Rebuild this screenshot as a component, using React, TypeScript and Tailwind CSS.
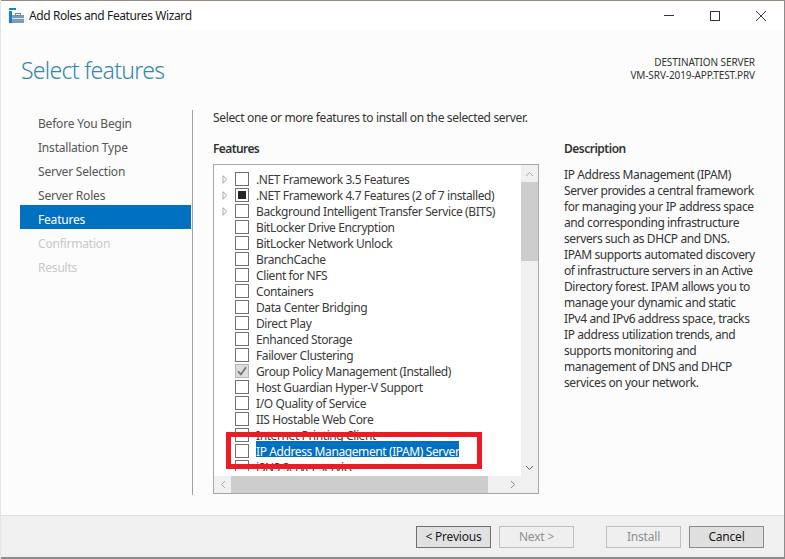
import React from 'react'

// === Data ===
const steps = [
  { label: 'Before You Begin' },
  { label: 'Installation Type' },
  { label: 'Server Selection' },
  { label: 'Server Roles' },
  { label: 'Features', active: true },
  { label: 'Confirmation', disabled: true },
  { label: 'Results', disabled: true },
]

type Feature = { label: string; arrow?: boolean; state?: 'partial' | 'checked'; selected?: boolean }

const features: Feature[] = [
  { label: '.NET Framework 3.5 Features', arrow: true },
  { label: '.NET Framework 4.7 Features (2 of 7 installed)', arrow: true, state: 'partial' },
  { label: 'Background Intelligent Transfer Service (BITS)', arrow: true },
  { label: 'BitLocker Drive Encryption' },
  { label: 'BitLocker Network Unlock' },
  { label: 'BranchCache' },
  { label: 'Client for NFS' },
  { label: 'Containers' },
  { label: 'Data Center Bridging' },
  { label: 'Direct Play' },
  { label: 'Enhanced Storage' },
  { label: 'Failover Clustering' },
  { label: 'Group Policy Management (Installed)', state: 'checked' },
  { label: 'Host Guardian Hyper-V Support' },
  { label: 'I/O Quality of Service' },
  { label: 'IIS Hostable Web Core' },
  { label: 'Internet Printing Client' },
  { label: 'IP Address Management (IPAM) Server', selected: true },
  { label: 'iSNS Server service' },
]

// line breaks as in the dialog
const description = [
  'IP Address Management (IPAM)',
  'Server provides a central framework',
  'for managing your IP address space',
  'and corresponding infrastructure',
  'servers such as DHCP and DNS.',
  'IPAM supports automated discovery',
  'of infrastructure servers in an Active',
  'Directory forest. IPAM allows you to',
  'manage your dynamic and static',
  'IPv4 and IPv6 address space, tracks',
  'IP address utilization trends, and',
  'supports monitoring and',
  'management of DNS and DHCP',
  'services on your network.',
]

function FeatureRow({ item }: { item: Feature }) {
  return (
    <div className="flex h-4 items-center">
      <div className="flex w-[21px] shrink-0 justify-center">
        {item.arrow && (
          <svg width="6" height="9" viewBox="0 0 6 9" className="ml-[1px]">
            <path d="M1 .8 5 4.5 1 8.2Z" fill="none" stroke="#a6a6a6" />
          </svg>
        )}
      </div>
      <div
        className={
          item.state === 'checked'
            ? 'flex h-[14px] w-[14px] shrink-0 items-center justify-center border border-[#b4b4b4] bg-[#dcdcdc]'
            : 'flex h-[14px] w-[14px] shrink-0 items-center justify-center border border-[#707070] bg-white'
        }
      >
        {item.state === 'partial' && <div className="h-2 w-2 bg-[#262626]" />}
        {item.state === 'checked' && (
          <svg width="10" height="10" viewBox="0 0 10 10">
            <path d="M1 5.2 3.8 8.4 9 1.2" fill="none" stroke="#6e6e6e" strokeWidth="1.6" />
          </svg>
        )}
      </div>
      {/* highlight sits 2px above the row, text 1px below its middle */}
      <span
        className={
          item.selected
            ? 'ml-[7px] h-4 -translate-y-[2px] whitespace-nowrap bg-[#0070c0] leading-[22px] tracking-[-0.4px] text-white'
            : 'ml-[7px] h-4 -translate-y-[2px] whitespace-nowrap leading-[22px] tracking-[-0.4px] text-[#3a3a3a]'
        }
      >
        {item.label}
      </span>
    </div>
  )
}

function WizardButton({ label, disabled, pressed }: { label: string; disabled?: boolean; pressed?: boolean }) {
  return (
    <button
      className={
        disabled
          ? 'h-[22px] w-[75px] border border-[#bfbfbf] bg-[#efefef] text-[#8f8f8f]'
          : pressed
            ? 'h-[22px] w-[75px] border border-[#707070] bg-[#e1e1e1] text-[#1c1c1c]'
            : 'h-[22px] w-[75px] border border-[#8a8a8a] bg-[#dfdfdf] text-[#1c1c1c]'
      }
    >
      {label}
    </button>
  )
}

// === Wizard ===
export default function App() {
  return (
    <div className="flex h-[559px] w-[785px] flex-col overflow-hidden border-x border-l-[#e4e4e4] border-r-[#8c8c8c] bg-[#fcfcfc] font-['Noto_Sans','Open_Sans',sans-serif] text-[12px] leading-4 tracking-[-0.2px] text-[#333]">
      <div className="h-px shrink-0 bg-[#9a8a80]" />

      {/* title bar */}
      <div className="flex h-[29px] shrink-0 items-center bg-white pl-2 text-[#1a1a1a]">
        <svg width="15" height="15" viewBox="0 0 15 15" className="shrink-0">
          <rect x="0" y="0" width="7" height="2" fill="#1481d2" />
          <rect x="0" y="3" width="3" height="12" fill="#1481d2" />
          <rect x="3" y="7" width="12" height="8" fill="#7d9db4" />
          <rect x="6.5" y="5.5" width="5" height="2" fill="none" stroke="#6a8aa0" strokeWidth="1" />
          <rect x="3" y="10" width="12" height="1" fill="#dbe6ee" />
        </svg>
        <span className="ml-[5px] tracking-[-0.4px]">Add Roles and Features Wizard</span>
        <div className="ml-auto flex items-center">
          <div className="flex w-[46px] justify-center">
            <div className="h-px w-[10px] bg-[#333]" />
          </div>
          <div className="flex w-[46px] justify-center">
            <div className="h-[10px] w-[10px] border border-[#333]" />
          </div>
          <div className="flex w-[46px] justify-center">
            <svg width="10" height="10" viewBox="0 0 10 10">
              <path d="M0 0 10 10M10 0 0 10" stroke="#333" strokeWidth="1" />
            </svg>
          </div>
        </div>
      </div>

      {/* header */}
      <div className="flex h-[80px] shrink-0 items-start justify-between pl-5 pr-[29px]">
        <h1 className="mt-[22px] text-[23px] leading-[36px] font-light tracking-[-0.7px] text-[#2f87b0]">
          Select features
        </h1>
        <div className="mt-[26px] text-right text-[10px] leading-[13px] tracking-[-0.1px] text-[#333]">
          <div>DESTINATION SERVER</div>
          <div>VM-SRV-2019-APP.TEST.PRV</div>
        </div>
      </div>

      {/* body */}
      <div className="flex h-[405px] shrink-0">
        <nav className="ml-[19px] mt-[-1px] w-[171px] shrink-0">
          {steps.map((s) => (
            <div
              key={s.label}
              className={
                s.active
                  ? 'flex h-6 items-center bg-[#0070c0] pl-[18px] pt-[6px] text-white'
                  : s.disabled
                    ? 'flex h-6 items-center pl-[18px] pt-[6px] text-[#c8c8c8]'
                    : 'flex h-6 items-center pl-[18px] pt-[6px] text-[#555]'
              }
            >
              {s.label}
            </div>
          ))}
        </nav>
        <div className="ml-px h-[385px] w-px shrink-0 self-start bg-[#a0a0a0]" />

        <main className="relative flex-1 pl-5">
          <p className="mt-[-2px] h-6 pt-[1px] leading-[18px] tracking-[-0.35px]">
            Select one or more features to install on the selected server.
          </p>
          <div className="mt-[9px] flex">
            <div className="w-[326px] shrink-0">
              <div className="h-[17px] font-semibold leading-[16px] tracking-[-0.6px]">Features</div>
              <div className="mt-[6px] flex h-[330px] w-[326px] flex-col border border-[#a8a8a8] bg-white">
                <div className="flex h-[311px]">
                  <div className="h-[306px] flex-1 overflow-hidden pt-[6px]">
                    {features.map((f) => (
                      <FeatureRow key={f.label} item={f} />
                    ))}
                  </div>
                  {/* vertical scrollbar */}
                  <div className="flex w-[17px] shrink-0 flex-col items-center bg-[#f0f0f0]">
                    <div className="flex h-[17px] items-center justify-center">
                      <svg width="9" height="6" viewBox="0 0 9 6">
                        <path d="M1 5 4.5 1.5 8 5" fill="none" stroke="#a8a8a8" />
                      </svg>
                    </div>
                    <div className="h-[79px] w-full bg-[#cdcdcd]" />
                    <div className="mt-auto flex h-[17px] items-center justify-center">
                      <svg width="9" height="6" viewBox="0 0 9 6">
                        <path d="M1 1 4.5 4.5 8 1" fill="none" stroke="#606060" />
                      </svg>
                    </div>
                  </div>
                </div>
                {/* horizontal scrollbar */}
                <div className="flex h-[17px] items-center bg-[#f0f0f0]">
                  <div className="flex w-[17px] shrink-0 justify-center">
                    <svg width="6" height="9" viewBox="0 0 6 9">
                      <path d="M5 1 1.5 4.5 5 8" fill="none" stroke="#a8a8a8" />
                    </svg>
                  </div>
                  <div className="h-full w-[257px] bg-[#cdcdcd]" />
                  <div className="ml-auto flex w-[17px] shrink-0 justify-center">
                    <svg width="6" height="9" viewBox="0 0 6 9">
                      <path d="M1 1 4.5 4.5 1 8" fill="none" stroke="#8a8a8a" />
                    </svg>
                  </div>
                  <div className="w-[17px] shrink-0" />
                </div>
              </div>
            </div>

            <div className="ml-[25px] w-[196px] shrink-0">
              <div className="h-[17px] font-semibold leading-[16px] tracking-[-0.5px]">Description</div>
              <div className="mt-[9px] tracking-[-0.4px]">
                {description.map((line) => (
                  <div key={line} className="h-4 whitespace-nowrap">
                    {line}
                  </div>
                ))}
              </div>
            </div>
          </div>
          {/* red annotation */}
          <div className="absolute left-[33px] top-[322px] h-[37px] w-[256px] border-[5px] border-[#ed1c24]" />
        </main>
      </div>

      {/* footer */}
      <div className="flex flex-1 items-start justify-end border-t border-b-2 border-t-[#dfdfdf] border-b-[#8c8c8c] bg-[#f0f0f0] pt-[10px] pr-[20px]">
        <WizardButton label="< Previous" pressed />
        <div className="w-2" />
        <WizardButton label="Next >" disabled />
        <div className="w-8" />
        <WizardButton label="Install" disabled />
        <div className="w-2" />
        <WizardButton label="Cancel" />
      </div>
    </div>
  )
}
